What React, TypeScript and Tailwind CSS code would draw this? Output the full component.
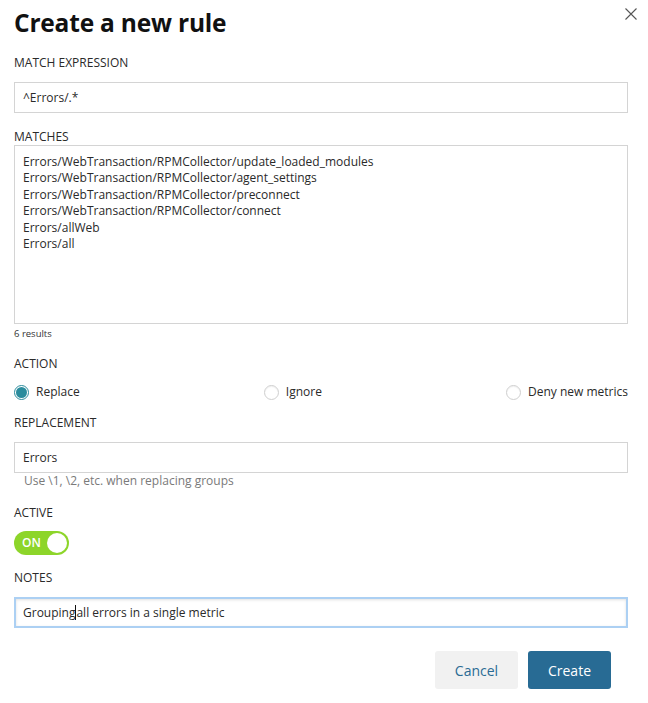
import React from "react";

const font = { fontFamily: '"Open Sans", "Noto Sans", sans-serif' };

function Label({ children, className = "" }: { children: React.ReactNode; className?: string }) {
  return (
    <div className={`text-[12px] leading-[16px] text-[#2a2a2a] ${className}`}>{children}</div>
  );
}

function Radio({ checked, label }: { checked?: boolean; label: string }) {
  return (
    <div className="flex items-center gap-[7px]">
      {checked ? (
        <span className="w-[15px] h-[15px] rounded-full border border-[#2a8c9d] bg-white flex items-center justify-center">
          <span className="w-[11px] h-[11px] rounded-full bg-[#2a8c9d]" />
        </span>
      ) : (
        <span className="w-[15px] h-[15px] rounded-full border border-[#cfcfcf] bg-white shadow-[inset_0_1px_1px_rgba(0,0,0,0.06)]" />
      )}
      <span className="text-[12px] leading-[16px] text-[#2a2a2a]">{label}</span>
    </div>
  );
}

export default function App() {
  const matches = [
    "Errors/WebTransaction/RPMCollector/update_loaded_modules",
    "Errors/WebTransaction/RPMCollector/agent_settings",
    "Errors/WebTransaction/RPMCollector/preconnect",
    "Errors/WebTransaction/RPMCollector/connect",
    "Errors/allWeb",
    "Errors/all",
  ];
  return (
    <div style={font} className="relative w-[648px] h-[703px] bg-white pl-[14px] pr-[20px] text-[#2a2a2a]">
      <button className="absolute right-[10px] top-[7px] w-[14px] h-[14px] text-[#555]" aria-label="close">
        <svg viewBox="0 0 14 14" width="14" height="14" fill="none" stroke="currentColor" strokeWidth="1.1">
          <path d="M1.5 1.5 L12.5 12.5 M12.5 1.5 L1.5 12.5" />
        </svg>
      </button>
      <h1 className="pt-[7px] text-[24.5px] leading-[32px] font-bold text-[#111] tracking-[-0.2px]">Create a new rule</h1>

      <Label className="mt-[16px]">MATCH EXPRESSION</Label>
      <div className="mt-[11px] h-[31px] border border-[#d4d4d4] px-[8px] flex items-center text-[12px]">^Errors/.*</div>

      <Label className="mt-[16px]">MATCHES</Label>
      <div className="h-[179px] border border-[#d4d4d4] pl-[8px] pt-[8px] text-[12px] leading-[16.4px]">
        {matches.map((m) => (
          <div key={m}>{m}</div>
        ))}
      </div>
      <div className="mt-[3px] text-[9.5px] leading-[14px] text-[#333]">6 results</div>

      <Label className="mt-[15px]">ACTION</Label>
      <div className="mt-[12px] flex justify-between items-center h-[16px]">
        <Radio checked label="Replace" />
        <Radio label="Ignore" />
        <Radio label="Deny new metrics" />
      </div>

      <Label className="mt-[15px]">REPLACEMENT</Label>
      <div className="mt-[11px] h-[31px] border border-[#d4d4d4] px-[8px] flex items-center text-[12px]">Errors</div>
      <div className="pl-[10px] text-[12px] leading-[16px] text-[#7a7a7a]">Use \1, \2, etc. when replacing groups</div>

      <Label className="mt-[16px]">ACTIVE</Label>
      <div className="mt-[10px] w-[55px] h-[24px] rounded-full bg-[#8dd52a] flex items-center justify-between pl-[8px] pr-[2px]">
        <span className="text-[12px] font-semibold text-white leading-none">ON</span>
        <span className="w-[20px] h-[20px] rounded-full bg-white" />
      </div>

      <Label className="mt-[15px]">NOTES</Label>
      <div className="mt-[11px] h-[31px] border-2 border-[#acd0f3] shadow-[inset_0_1px_3px_rgba(0,0,0,0.12)] px-[7px] flex items-center text-[12px]">
        <span>Grouping</span>
        <span className="inline-block w-px h-[15px] bg-[#111]" />
        <span>all errors in a single metric</span>
      </div>

      <div className="mt-[23px] flex justify-end gap-[10px] pr-[17px]">
        <button className="w-[83px] h-[38px] rounded-[3px] bg-[#f1f1f1] text-[#2a6b94] text-[14px]">Cancel</button>
        <button className="w-[83px] h-[38px] rounded-[3px] bg-[#286b94] text-white text-[14px]">Create</button>
      </div>
    </div>
  );
}
